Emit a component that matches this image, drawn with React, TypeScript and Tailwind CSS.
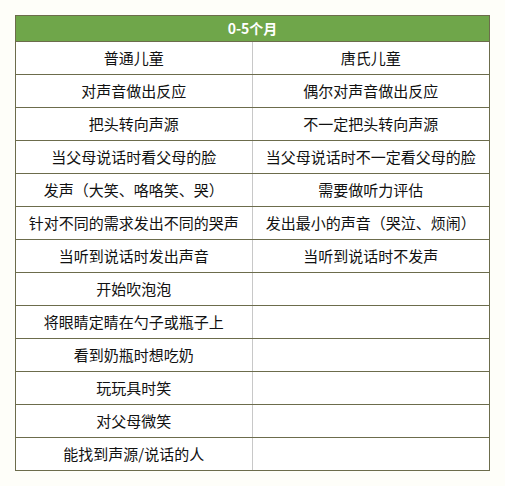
const rows: [string, string][] = [
  ["普通儿童", "唐氏儿童"],
  ["对声音做出反应", "偶尔对声音做出反应"],
  ["把头转向声源", "不一定把头转向声源"],
  ["当父母说话时看父母的脸", "当父母说话时不一定看父母的脸"],
  ["发声（大笑、咯咯笑、哭）", "需要做听力评估"],
  ["针对不同的需求发出不同的哭声", "发出最小的声音（哭泣、烦闹）"],
  ["当听到说话时发出声音", "当听到说话时不发声"],
  ["开始吹泡泡", ""],
  ["将眼睛定睛在勺子或瓶子上", ""],
  ["看到奶瓶时想吃奶", ""],
  ["玩玩具时笑", ""],
  ["对父母微笑", ""],
  ["能找到声源/说话的人", ""],
];

export default function App() {
  return (
    <div
      className="w-[505px] h-[486px] bg-[#fefef9] pt-[15px] pl-[15px]"
      style={{ fontFamily: '"Noto Sans CJK SC", "Noto Sans", sans-serif' }}
    >
      <div className="w-[475px] border border-[#6c6c4c] bg-white">
        <div className="h-[25px] bg-[#6fa64a] flex items-center justify-center text-white text-[14px] font-bold">
          0-5个月
        </div>
        {rows.map(([a, b], i) => (
          <div key={i} className="grid grid-cols-2 h-[33px] border-t border-[#6c6c4c]">
            <div className="flex items-center justify-center text-[15px] text-[#111] border-r border-[#c8c8c8]">
              {a}
            </div>
            <div className="flex items-center justify-center text-[15px] text-[#111]">
              {b}
            </div>
          </div>
        ))}
      </div>
    </div>
  );
}
